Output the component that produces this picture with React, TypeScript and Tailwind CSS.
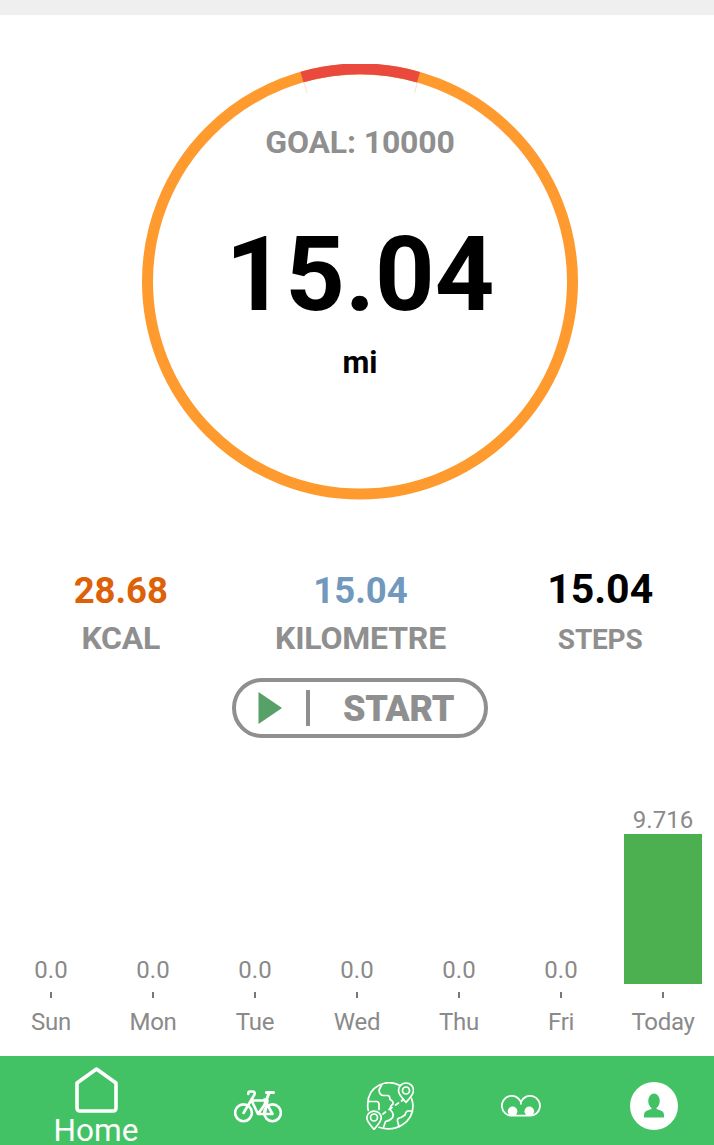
const stats = [
  { value: "28.68", label: "KCAL", valueClass: "text-[36.5px] text-[#dd6107]", labelClass: "text-[32px]" },
  { value: "15.04", label: "KILOMETRE", valueClass: "text-[36.5px] text-[#7198bd]", labelClass: "text-[32px]" },
  { value: "15.04", label: "STEPS", valueClass: "text-[41px] text-black", labelClass: "text-[28px]" },
];

const week = [
  { day: "Sun", value: "0.0", height: 0 },
  { day: "Mon", value: "0.0", height: 0 },
  { day: "Tue", value: "0.0", height: 0 },
  { day: "Wed", value: "0.0", height: 0 },
  { day: "Thu", value: "0.0", height: 0 },
  { day: "Fri", value: "0.0", height: 0 },
  { day: "Today", value: "9.716", height: 150 },
];

const GoalRing = () => (
  <div className="relative h-[436px] w-[436px]">
    <svg viewBox="0 0 436 436" className="absolute inset-0 h-full w-full" fill="none">
      <circle cx="218" cy="217.5" r="212.5" stroke="#fe9a2e" strokeWidth="11" />
      <path d="M160 13.05A212.5 212.5 0 0 1 276.500 13.2" stroke="#ea4a3d" strokeWidth="11" />
      <path d="M162 18.5l3 10.5M275.500 18.5l-3 10.5" stroke="#f8c9ae" strokeWidth="0.6" />
    </svg>
    <div className="relative flex flex-col items-center pt-[59px] font-bold">
      <p className="text-[32px] leading-[38px] tracking-[-0.15px] text-[#8f8f8f]">GOAL: 10000</p>
      <p className="mt-[54px] text-[104px] leading-[120px] text-black">15.04</p>
      <p className="mt-[10px] text-[31px] leading-9 text-black">mi</p>
    </div>
  </div>
);

const Stats = () => (
  <div className="grid w-[720px] grid-cols-3 items-baseline gap-y-1 pl-px text-center font-bold">
    {stats.map((s) => (
      <p key={s.label} className={`${s.valueClass} leading-[48px]`}>
        {s.value}
      </p>
    ))}
    {stats.map((s) => (
      <p key={s.label} className={`${s.labelClass} leading-[38px] tracking-[-0.2px] text-[#8f8f8f]`}>
        {s.label}
      </p>
    ))}
  </div>
);

const StartButton = () => (
  <button className="flex h-[60px] w-64 items-center rounded-full border-4 border-[#8f8f8f] pl-[22px]">
    <svg viewBox="0 0 24 32" className="h-8 w-6" fill="#57a068">
      <path d="M0.5 0L24 16L0.5 32Z" />
    </svg>
    <span className="ml-6 h-9 w-1 bg-[#8f8f8f]" />
    <span className="ml-[33px] pt-px text-[36px] leading-[42px] font-black tracking-[-0.4px] text-[#8f8f8f]">START</span>
  </button>
);

const WeekChart = () => (
  <div className="flex h-[240px] items-end text-[24px] text-[#8a8a8a]">
    {week.map((w) => (
      <div key={w.day} className="flex w-[102px] flex-col items-center">
        <span className="leading-7">{w.value}</span>
        <span className="w-[78px] bg-[#4caf50]" style={{ height: w.height }} />
        <span className="mt-2 h-1.5 w-0.5 bg-[#777777]" />
        <span className="mt-[10px] leading-7 tracking-[-0.3px]">{w.day}</span>
      </div>
    ))}
  </div>
);

const HomeIcon = () => (
  <svg viewBox="0 0 48 48" className="h-12 w-12 shrink-0" fill="none" stroke="white" strokeWidth="3.6" strokeLinejoin="round">
    <path d="M24.500 4L44 18V43Q44 46 41 46H8Q5 46 5 43V18Z" />
  </svg>
);

const BikeIcon = () => (
  <svg viewBox="0 0 48 48" className="h-12 w-12" fill="none" stroke="white" strokeWidth="2.6" strokeLinecap="round" strokeLinejoin="round">
    <circle cx="9.500" cy="30.800" r="8.400" />
    <circle cx="38.500" cy="30.800" r="8.400" />
    <path d="M9.500 31L20.500 12.500Q21.300 9.500 18.500 9.500H15.800Q14 9.500 14.300 12M17.500 18.500L24 32L33.500 18.500H17.500M24 32H38.500L30.500 17.500M33.500 18.500L31 31" />
    <path d="M32.500 10.500H39.500M35 11L31 21.500" strokeWidth="3" />
  </svg>
);

const RouteIcon = () => (
  <svg viewBox="0 0 48 48" className="h-12 w-12" fill="none" stroke="white" strokeWidth="1.700" strokeLinecap="round" strokeLinejoin="round">
    <path d="M34 3.500C21 -3.500 1.800 3.500 1.800 22Q1.500 26 2.300 28.500M13 45.300C30 51 47 40 47 24Q47 20.500 45.500 16.500" />
    <path d="M40 20.300Q32.500 12.500 32.500 8.500A7.500 7.500 0 0 1 47.500 8.500Q47.500 12.500 40 20.300Z" />
    <circle cx="40" cy="8.500" r="3.500" />
    <path d="M8 47.300Q0.800 39.500 0.800 35.500A7.300 7.300 0 0 1 15.300 35.500Q15.300 39.500 8 47.300Z" />
    <circle cx="8" cy="35.500" r="3.500" />
    <path d="M15.500 3L13 8Q13.500 13 17 13.500H22Q24 14 24 17.500Q27.500 19 27 22Q23.500 24.500 24.500 28Q28.500 32 26.500 35.500Q24.500 38.500 19.500 39.500L17.500 45.500" />
    <path d="M2 19.500H11Q13 20 13 22.500V27.500" />
    <path d="M46 29L41.500 29Q39.500 30 39 33L35 35.500Q31 36 31.500 39L33 44.500" />
    <path d="M17 32L19.500 30M23 27.500L26 25.500M29.500 23L32.500 21M35.500 19L37.500 17.500" />
  </svg>
);

const EyesIcon = () => (
  <svg viewBox="0 0 48 48" className="h-12 w-12">
    <g fill="none" stroke="white" strokeWidth="1.800" strokeLinejoin="round">
      <path d="M22.900 20A9.900 9.900 0 1 0 13.600 33.700H32.100A9.900 9.900 0 1 0 22.900 20V22.500" />
    </g>
    <circle cx="14.600" cy="29.300" r="4.800" fill="white" />
    <circle cx="31.300" cy="29.300" r="4.800" fill="white" />
  </svg>
);

const ProfileIcon = () => (
  <svg viewBox="0 0 48 48" className="h-12 w-12">
    <circle cx="24" cy="24" r="24" fill="white" />
    <ellipse cx="24" cy="19" rx="5.800" ry="7.500" fill="#43c265" />
    <path d="M14 35.500V33Q14 29.500 18 28.300L21.500 27V24H26.500V27L30 28.300Q34 29.500 34 33V35.500Z" fill="#43c265" />
  </svg>
);

const navIcons = [BikeIcon, RouteIcon, EyesIcon, ProfileIcon];

const BottomNav = () => (
  <nav className="flex h-[89px] w-[720px] bg-[#43c265]">
    <a className="flex w-48 flex-col items-center pt-[9px] text-white">
      <HomeIcon />
      <span className="text-[31.5px] leading-9">Home</span>
    </a>
    {navIcons.map((Icon, i) => (
      <a key={i} className="flex w-[132px] justify-center pt-[26px]">
        <Icon />
      </a>
    ))}
  </nav>
);

const App = () => {
  return (
    <main className="flex h-[1145px] w-[714px] flex-col overflow-hidden bg-white font-['Roboto',sans-serif]">
      <div className="h-[15px] shrink-0 bg-[#efefef]" />
      <section className="flex w-[720px] flex-col items-center pt-[49px]">
        <GoalRing />
        <div className="mt-[65px]">
          <Stats />
        </div>
        <div className="mt-[19px]">
          <StartButton />
        </div>
      </section>
      <div className="mt-auto pb-5">
        <WeekChart />
      </div>
      <BottomNav />
    </main>
  );
};

export default App;
